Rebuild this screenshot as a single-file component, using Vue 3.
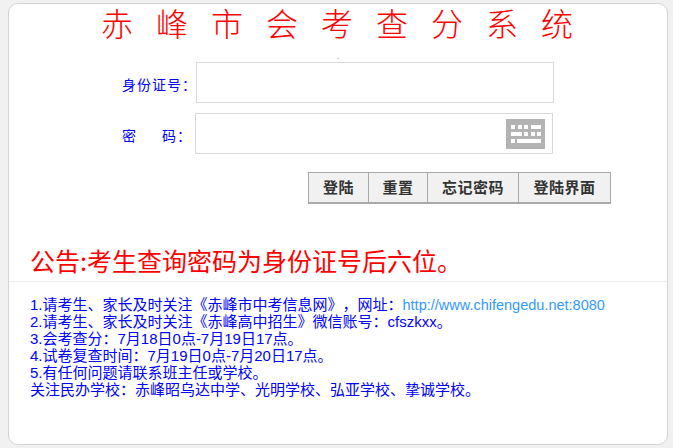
<template>
  <div class="page">
    <div class="card">
      <h1 class="title">赤峰市会考查分系统</h1>
      <div class="dot">.</div>

      <!-- login form -->
      <div class="form-row first">
        <label class="label">身份证号：</label>
        <div class="field"></div>
      </div>
      <div class="form-row second">
        <label class="label pwd"><span>密</span><span>码：</span></label>
        <div class="field">
          <svg class="kbd" width="39" height="30" viewBox="0 0 39 30">
            <rect width="39" height="30" fill="#b3b3b3" />
            <g fill="#fff">
              <rect x="5" y="6" width="4" height="4" />
              <rect x="12" y="6" width="4" height="4" />
              <rect x="18" y="6" width="4" height="4" />
              <rect x="25" y="6" width="10" height="4" />
              <rect x="5" y="13" width="11" height="4" />
              <rect x="18" y="13" width="4" height="4" />
              <rect x="25" y="13" width="4" height="4" />
              <rect x="31" y="13" width="4" height="4" />
              <rect x="5" y="20" width="4" height="4" />
              <rect x="11" y="20" width="24" height="4" />
            </g>
          </svg>
        </div>
      </div>

      <div class="buttons">
        <button v-for="b in buttons" :key="b.text" class="btn" :style="{ width: b.width + 'px' }">{{ b.text }}</button>
      </div>

      <div class="notice">公告:考生查询密码为身份证号后六位。</div>

      <div class="info">
        <p>1.请考生、家长及时关注《赤峰市中考信息网》，网址：<a class="link">http://www.chifengedu.net:8080</a></p>
        <p>2.请考生、家长及时关注《赤峰高中招生》微信账号：cfszkxx。</p>
        <p>3.会考查分：7月18日0点-7月19日17点。</p>
        <p>4.试卷复查时间：7月19日0点-7月20日17点。</p>
        <p>5.有任何问题请联系班主任或学校。</p>
        <p>关注民办学校：赤峰昭乌达中学、光明学校、弘亚学校、挚诚学校。</p>
      </div>
    </div>
  </div>
</template>

<script setup>
const buttons = [
  { text: '登陆', width: 61 },
  { text: '重置', width: 60 },
  { text: '忘记密码', width: 92 },
  { text: '登陆界面', width: 93 },
]
</script>

<style>
html,
body {
  margin: 0;
  background: #fff;
}
</style>

<style scoped>
.page {
  width: 673px;
  height: 448px;
  box-sizing: border-box;
  padding: 3px 5px 3px 8px;
  background: #f1f1f1;
  font-family: 'Liberation Sans', 'Noto Sans CJK SC', sans-serif;
  text-spacing-trim: space-all;
}

.card {
  height: 442px;
  box-sizing: border-box;
  background: #fff;
  border: 1px solid #d4d4d4;
  border-radius: 10px;
}

.title {
  margin: 0;
  padding-left: 92px;
  height: 44px;
  font-family: 'Noto Sans CJK SC', sans-serif;
  font-size: 32px;
  font-weight: 300;
  line-height: 36px;
  letter-spacing: 23px;
  color: #f00;
  white-space: nowrap;
}

.dot {
  height: 11px;
  padding: 3px 0 0 328px;
  font-size: 8px;
  line-height: 11px;
  color: #2a8bb0;
}

.form-row {
  display: flex;
  align-items: center;
  height: 41px;
}

.form-row.first {
  padding-left: 113px;
}

.form-row.second {
  padding-left: 113px;
  margin-top: 10px;
}

.label {
  width: 74px;
  flex: none;
  padding-top: 2px;
  font-size: 14px;
  letter-spacing: 1px;
  color: #00f;
  white-space: nowrap;
}

.pwd {
  display: flex;
  gap: 25px;
  width: 73px;
}

.field {
  position: relative;
  width: 358px;
  height: 41px;
  box-sizing: border-box;
  border: 1px solid #d8d8d8;
}

.kbd {
  position: absolute;
  top: 5px;
  right: 7px;
}

.buttons {
  display: flex;
  margin: 18px 0 0 299px;
}

.btn {
  height: 32px;
  padding: 0 0 3px;
  margin-left: -1px;
  box-sizing: border-box;
  border: 1px solid #a9a9a9;
  border-width: 1px 1px 2px;
  background: #f1f1f1;
  font-family: 'Noto Sans CJK SC', sans-serif;
  font-size: 15px;
  font-weight: 700;
  letter-spacing: 0.5px;
  color: #333;
}

.btn:first-child {
  margin-left: 0;
}

.notice {
  margin: 39px 0 0;
  padding-left: 21px;
  height: 38px;
  border-bottom: 1px solid #eee;
  font-family: 'Noto Sans CJK SC', sans-serif;
  font-size: 25px;
  font-weight: 400;
  line-height: 35px;
  color: #f00;
  white-space: nowrap;
}

.info {
  padding: 14px 0 0 21px;
  font-size: 15px;
  line-height: 17px;
  color: #00f;
  white-space: nowrap;
}

.info p {
  margin: 0;
  height: 17px;
}

.link {
  font-size: 14.5px;
  color: #3399ff;
}
</style>
